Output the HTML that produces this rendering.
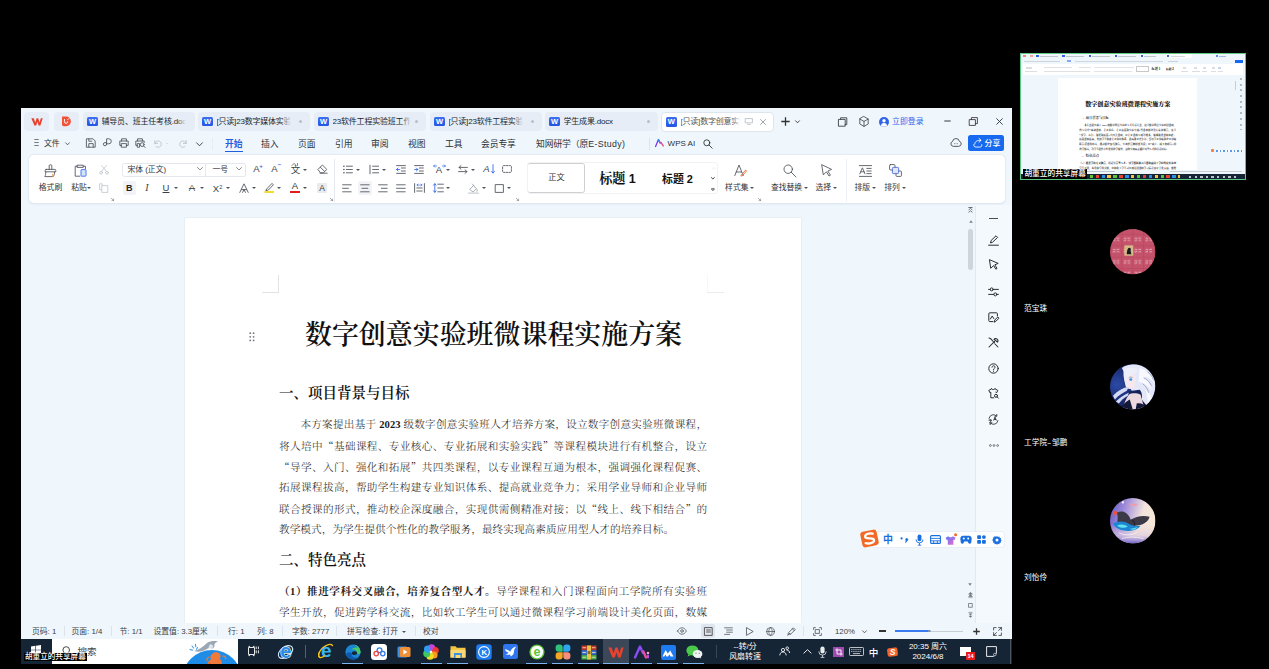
<!DOCTYPE html>
<html lang="zh-CN">
<head>
<meta charset="utf-8">
<title>数字创意实验班微课程实施方案</title>
<style>
*{box-sizing:border-box;margin:0;padding:0}
html,body{width:1269px;height:669px;overflow:hidden;background:#000}
body{position:relative;font-family:"Liberation Sans","Noto Sans CJK SC",sans-serif;color:#222;font-size:9.3px;line-height:1}
.abs{position:absolute}
.t{position:absolute;white-space:nowrap;line-height:1}
svg{position:absolute;overflow:visible}
#win{position:absolute;left:21px;top:108px;width:991px;height:532px;background:#f0f7fc;overflow:hidden}
/* tab strip */
.tab{position:absolute;top:4px;height:19px;border-radius:4px;background:#e6edf6}
.tab.act{background:#fff;border:1px solid #dfe5ee}
.tab .w{position:absolute;left:4.3px;top:4.6px;width:10.6px;height:9.6px;background:linear-gradient(180deg,#3b6ff2,#2455e2);border-radius:1.5px;color:#fff;font-size:7.5px;font-weight:bold;text-align:center;line-height:10px}
.tab .n{position:absolute;left:18.5px;top:4.5px;font-size:8px;color:#22262c;white-space:nowrap;line-height:10px;letter-spacing:-0.2px;max-width:86px;overflow:hidden}
.tab .n::after{content:"";position:absolute;right:0;top:0;width:9px;height:100%;background:linear-gradient(90deg,rgba(230,237,246,0),#e6edf6)}
.tab .n.nf::after{display:none}
.tab.act{top:3.7px;height:20px}
.tab.act .n{max-width:60.5px;top:4.6px}
.tab.act .w{top:4.6px;left:4px}
.tab.act .n::after{background:linear-gradient(90deg,rgba(255,255,255,0),#fff)}
.tab .d{position:absolute;right:8px;top:8px;width:3px;height:3px;border-radius:50%;background:#b9c0cb}
.menu{position:absolute;top:30px;font-size:8.8px;color:#2b3038;line-height:12px;white-space:nowrap;letter-spacing:-0.1px}
#rib{position:absolute;left:8px;top:47px;width:976px;height:48px;background:#fff;border-radius:5px;box-shadow:0 0 0 0.6px #e3e9f1,0 0.5px 2.5px rgba(150,170,200,.3)}
.rl{position:absolute;font-size:7.8px;color:#30353c;white-space:nowrap;line-height:10px;top:183px;transform:translateX(-50%)}
.ic{stroke:#4a4f57;stroke-width:0.85;fill:none;stroke-linecap:round;stroke-linejoin:round}
.gl{position:absolute;white-space:nowrap;line-height:12px;color:#3a3f47;transform:translate(-50%,-50%);font-size:10px}
.car{position:absolute;width:0;height:0;border-left:2px solid transparent;border-right:2px solid transparent;border-top:2.4px solid #50555d;margin-left:-2px;margin-top:-1px}
/* document */
#page{position:absolute;left:164px;top:110px;width:616px;height:420px;background:#fff;box-shadow:0 0 0 0.6px #e2e8f0}
.doc{font-family:"Liberation Serif","Noto Serif CJK SC",serif;color:#111}
.ln{position:absolute;left:279px;width:428px;font-size:10.6px;line-height:14px;height:14px;text-align:justify;text-align-last:justify;white-space:nowrap;font-family:"Liberation Serif","Noto Serif CJK SC",serif;color:#1a1a1a;font-weight:300}
.ln b{font-weight:700}
.sb{position:absolute;top:626.8px;font-size:7.8px;color:#3a3f47;white-space:nowrap;line-height:10px}
.q{font-family:"Noto Serif CJK SC",serif}
#task{position:absolute;left:21px;top:638.8px;width:991px;height:25.2px;background:#152536;overflow:hidden}
</style>
</head>
<body>

<!-- ===================== WPS WINDOW ===================== -->
<div id="win">
  <!-- tab strip -->
  <div class="tab" style="left:3px;width:25px"></div>
  <div class="tab" style="left:33px;width:25px"></div>
  <div class="tab" style="left:62px;width:112px"><span class="w">W</span><span class="n">辅导员、班主任考核.doc</span></div>
  <div class="tab" style="left:177px;width:112px"><span class="w">W</span><span class="n">[只读]23数字媒体实验</span><span class="d"></span></div>
  <div class="tab" style="left:293px;width:112px"><span class="w">W</span><span class="n">23软件工程实验班工作</span><span class="d"></span></div>
  <div class="tab" style="left:409px;width:112px"><span class="w">W</span><span class="n">[只读]23软件工程实验</span><span class="d"></span></div>
  <div class="tab" style="left:524px;width:113px"><span class="w">W</span><span class="n nf">学生成果.docx</span><span class="d"></span></div>
  <div class="tab act" style="left:640px;width:113px"><span class="w">W</span><span class="n" style="color:#555">[只读]数字创意实验</span></div>

  <!-- menu row -->
  <span class="menu" style="left:23px;font-size:7.9px">文件</span>
  <span class="menu" style="left:204px;color:#1f5fe0;font-weight:bold">开始</span>
  <div class="abs" style="left:204px;top:43px;width:18px;height:1.4px;background:#1f5fe0"></div>
  <span class="menu" style="left:240px">插入</span>
  <span class="menu" style="left:277px">页面</span>
  <span class="menu" style="left:314px">引用</span>
  <span class="menu" style="left:350px">审阅</span>
  <span class="menu" style="left:387px">视图</span>
  <span class="menu" style="left:424px">工具</span>
  <span class="menu" style="left:460px">会员专享</span>
  <span class="menu" style="left:515px">知网研学（原<span style="letter-spacing:0.350px">E-Study)</span></span>
  <span class="menu" style="left:646.6px;font-size:8px;letter-spacing:0">WPS AI</span>

  <!-- ribbon -->
  <div id="rib"></div>

  <!-- page -->
  <div id="page"></div>

  <!-- global-coordinate layer (coordinates = screenshot pixels) -->
  <div id="g" class="abs" style="left:-21px;top:-108px;width:1269px;height:669px">


    <!-- ============ TAB STRIP ICONS ============ -->
    <svg style="left:30.5px;top:117.5px" width="12" height="8" viewBox="0 0 12 8"><path d="M0.3 0.3h2.5l1.4 4.2L5.6 0.3h1.6l1.3 4.2 1.3-4.2h1.9L9.4 7.6H7.6L6.4 3.8 5.2 7.6H3.4z" fill="#e8412f"/></svg>
    <svg style="left:60.8px;top:116.2px" width="10.2" height="10.8" viewBox="0 0 10 10" preserveAspectRatio="none"><path d="M1 0.5h4.2a4.5 4.5 0 0 1 0 9H2.6A1.6 1.6 0 0 1 1 7.9z" fill="#f0523a"/><path d="M3.4 3.2v2a1.6 1.6 0 0 0 3.2 0M6.6 3.4l1-1" stroke="#fff" stroke-width="0.9" fill="none" stroke-linecap="round"/></svg>
    <!-- active tab extras -->
    <svg style="left:745px;top:118px" width="8" height="7" viewBox="0 0 8 7"><path class="ic" d="M0.6 0.6h6.8v4.2H0.6zM2.6 6.4h2.8" style="stroke:#aab0b9;stroke-width:0.7"/></svg>
    <svg style="left:760px;top:118.5px" width="6" height="6" viewBox="0 0 6 6"><path class="ic" d="M0.5 0.5l5 5M5.5 0.5l-5 5" style="stroke:#8a9099;stroke-width:0.8"/></svg>
    <svg style="left:780.5px;top:117px" width="9" height="9" viewBox="0 0 9 9"><path d="M4.5 0.3v8.4M0.3 4.5h8.4" stroke="#333" stroke-width="1.3" fill="none"/></svg>
    <svg style="left:795px;top:120px" width="5" height="4" viewBox="0 0 5 4"><path class="ic" d="M0.6 0.8L2.5 2.8 4.4 0.8" style="stroke:#333;stroke-width:0.9"/></svg>
    <svg style="left:838px;top:116.5px" width="10" height="10" viewBox="0 0 10 10"><path class="ic" d="M0.8 2.4h6.4v6.8H0.8zM2.6 2.4V0.8h6.2v6.8H7.2" style="stroke:#3a3f47;stroke-width:0.9"/></svg>
    <svg style="left:858.5px;top:116px" width="10" height="11" viewBox="0 0 10 11"><path class="ic" d="M5 0.6l4.2 2.4v5L5 10.4 0.8 8V3zM0.8 3L5 5.4 9.2 3M5 5.4v5" style="stroke:#3a3f47;stroke-width:0.8"/></svg>
    <svg style="left:878.5px;top:116.5px" width="10" height="10" viewBox="0 0 10 10"><circle cx="5" cy="5" r="5" fill="#2f64e8"/><circle cx="5" cy="3.8" r="1.7" fill="#fff"/><path d="M1.8 8.4a3.3 3.3 0 0 1 6.4 0a4.6 4.6 0 0 1-6.4 0z" fill="#fff"/></svg>
    <span class="t" style="left:892px;top:117px;font-size:7.9px;color:#2f64e8;line-height:10px">立即登录</span>
    <svg style="left:944px;top:119.5px" width="7" height="2" viewBox="0 0 7 2"><path d="M0.3 1h6.4" stroke="#222" stroke-width="0.9"/></svg>
    <svg style="left:969px;top:116.5px" width="9" height="9" viewBox="0 0 9 9"><path class="ic" d="M0.6 2.6h5.8v5.8H0.6zM2.4 2.6V0.6h6v6H6.4" style="stroke:#333;stroke-width:0.850"/></svg>
    <svg style="left:995.5px;top:118px" width="7" height="7" viewBox="0 0 7 7"><path d="M0.4 0.4l6.2 6.2M6.6 0.4L0.4 6.6" stroke="#333" stroke-width="0.9" fill="none"/></svg>

    <!-- ============ MENU ROW ICONS ============ -->
    <svg style="left:33.5px;top:139.4px" width="5" height="7" viewBox="0 0 5 7"><path d="M0.3 0.5h4.4M0.3 3.5h4.4M0.3 6.5h4.4" stroke="#444" stroke-width="0.7"/></svg>
    <svg style="left:64.5px;top:142px" width="5" height="4" viewBox="0 0 5 4"><path class="ic" d="M0.6 0.8L2.5 2.8 4.4 0.8" style="stroke:#444;stroke-width:0.8"/></svg>
    <svg style="left:85.5px;top:138px" width="10" height="10" viewBox="0 0 10 10"><path class="ic" d="M0.8 0.8h6.2l2.2 2.2v6.2H0.8zM2.8 9V5.6h4.4V9M2.8 0.8v2.4h3"/></svg>
    <svg style="left:102.5px;top:138px" width="9" height="10" viewBox="0 0 9 10"><path class="ic" d="M3.6 6.2V0.8h2.2a2.5 2.5 0 0 1 0 5H3.6M3.6 6.2a1.6 1.6 0 1 1-1.6-1.6h1.6"/></svg>
    <svg style="left:118.5px;top:138px" width="10" height="10" viewBox="0 0 10 10"><path class="ic" d="M2.6 3V0.8h4.8V3M2.6 7.4H0.8V3h8.4v4.4H7.4M2.6 5.6h4.8v3.6H2.6z"/></svg>
    <svg style="left:135px;top:138px" width="11" height="10" viewBox="0 0 11 10"><path class="ic" d="M2.6 3V0.8h4.8V3M2.4 7.4H0.8V3h8.4v1.4M2.6 5.6h2v3.6h-2z"/><circle cx="7.2" cy="6.6" r="1.9" class="ic"/><path class="ic" d="M8.6 8l1.6 1.6"/></svg>
    <svg style="left:154px;top:139.5px" width="8" height="8" viewBox="0 0 8 8"><path class="ic" d="M0.8 0.6v2.8h2.8M1 3.2a3.2 3.2 0 1 1 1 3.4" style="stroke:#b9bec6"/></svg><i class="car" style="left:167.6px;top:144px;border-top-color:#c4c8cf;border-left-width:1.5px;border-right-width:1.5px;border-top-width:1.8px;margin-left:-1.5px"></i>
    <svg style="left:178.5px;top:139.5px" width="8" height="8" viewBox="0 0 8 8"><path class="ic" d="M7.2 0.6v2.8H4.4M7 3.2a3.2 3.2 0 1 0-1 3.4" style="stroke:#b9bec6"/></svg>
    <svg style="left:195.5px;top:141.5px" width="7" height="5" viewBox="0 0 7 5"><path class="ic" d="M0.6 0.8L3.5 3.8 6.4 0.8" style="stroke:#333;stroke-width:0.9"/></svg>
    <div class="abs" style="left:212px;top:137.5px;width:0.7px;height:12px;background:#e8edf4"></div>
    <div class="abs" style="left:649px;top:137.5px;width:0.7px;height:12px;background:#dfe4ec"></div>
    <svg style="left:654.6px;top:138.8px" width="9" height="8" viewBox="0 0 10 9"><path d="M0.6 8.4L3.8 0.6l2 4.2" stroke="#7a3df0" stroke-width="1.5" fill="none" stroke-linejoin="round" stroke-linecap="round"/><path d="M6.4 3.6l2.8 4.2" stroke="#f0437a" stroke-width="1.5" fill="none" stroke-linecap="round"/><path d="M3.8 0.8l1.2 2.6" stroke="#2f8cf0" stroke-width="1.5" fill="none" stroke-linecap="round"/></svg>
    <svg style="left:702.5px;top:139px" width="10" height="10" viewBox="0 0 10 10"><circle cx="3.8" cy="3.8" r="3" class="ic" style="stroke:#333;stroke-width:0.9"/><path d="M6 6l3.2 3.2" class="ic" style="stroke:#333;stroke-width:0.9"/></svg>
    <svg style="left:949.6px;top:137.7px" width="12" height="9" viewBox="0 0 12 9"><path class="ic" d="M3 8.3A2.5 2.5 0 0 1 2.5 3.5A3.5 3.5 0 0 1 9.4 3.4A2.5 2.5 0 0 1 9 8.3z" style="stroke:#333;stroke-width:0.8"/><g fill="#333"><circle cx="4.3" cy="5.7" r="0.45"/><circle cx="6" cy="5.7" r="0.45"/><circle cx="7.7" cy="5.7" r="0.45"/></g></svg>
    <div class="abs" style="left:968.2px;top:135.2px;width:36.2px;height:15.4px;background:#176af0;border-radius:2.5px"></div>
    <svg style="left:972.5px;top:138.2px" width="9.5" height="9.5" viewBox="0 0 9 9"><path d="M1.7 5.6C1.7 3.2 4 2.1 7.4 2.2M5.7 0.5L7.6 2.2 5.7 4M0.8 6.2C0.5 8 1.6 8.6 3 8.6H6.2C7.7 8.6 8.6 8 8.3 6.3" stroke="#fff" stroke-width="0.85" fill="none" stroke-linecap="round" stroke-linejoin="round"/></svg>
    <span class="t" style="left:984.6px;top:139.2px;font-size:7.9px;color:#fff;line-height:10px;font-weight:500">分享</span>

    <!-- ============ RIBBON CONTENT ============ -->
    <!-- clipboard group -->
    <svg style="left:43.6px;top:163.8px" width="13" height="13.5" viewBox="0 0 13 13.5"><path class="ic" d="M5.2 5.4V1.7a0.9 0.9 0 0 1 0.9-0.9h0.8a0.9 0.9 0 0 1 0.9 0.9v3.7M2.2 5.4h8.6a1 1 0 0 1 1 1v1.4H1.2V6.4a1 1 0 0 1 1-1zM1.8 7.8c0 2.2-.4 3.6-1 4.8h8.4c1-1.2 1.4-2.8 1.4-4.8"/><path d="M8.6 10.2v2.4" class="ic" style="stroke:#e39a4a"/></svg>
    <span class="rl" style="left:50.5px">格式刷</span>
    <svg style="left:74px;top:164px" width="13" height="13" viewBox="0 0 13 13"><path class="ic" d="M3.2 2.2H1.2v10h4.6M9.4 2.2h2v2.6M3.4 1.2h5.8v2.2H3.4z"/><rect x="7" y="5.6" width="5" height="6.6" rx="0.6" fill="#d6e4ff" stroke="#3a6cf0" stroke-width="0.9"/></svg>
    <span class="rl" style="left:79px">粘贴</span><i class="car" style="left:88.5px;top:188px"></i>
    <svg style="left:99px;top:165px" width="10" height="10" viewBox="0 0 10 10"><g class="ic" style="stroke:#c3c8cf"><path d="M2.6 0.6L7.6 6.6M7.4 0.6L2.4 6.6"/><circle cx="2" cy="7.8" r="1.4"/><circle cx="8" cy="7.8" r="1.4"/></g></svg>
    <svg style="left:99px;top:182.5px" width="10" height="10" viewBox="0 0 10 10"><g class="ic" style="stroke:#c3c8cf"><path d="M3.2 2.6V0.8h-2.6v5.8h2M3.2 2.6h5.6v6.8H3.2z"/></g></svg>
    <svg style="left:111px;top:198px" width="3" height="3" viewBox="0 0 3 3"><path d="M0.3 0.3L2.6 2.6M2.6 1v1.6H1" class="ic" style="stroke-width:0.6;stroke:#777"/></svg>

    <!-- font group row 1 -->
    <div class="abs" style="left:121.5px;top:162.5px;width:84px;height:14px;border:0.7px solid #e4e8ee;border-radius:2.5px 0 0 2.5px;background:#fff"></div>
    <div class="abs" style="left:205.5px;top:162.5px;width:40px;height:14px;border:0.7px solid #e4e8ee;border-left:none;border-radius:0 2.5px 2.5px 0;background:#fff"></div>
    <span class="t" style="left:127.5px;top:164.6px;font-size:7.8px;color:#30353c;line-height:9px">宋体 (正文)</span>
    <svg style="left:197px;top:167.1px" width="6" height="4" viewBox="0 0 6 4"><path class="ic" d="M0.5 0.5L3 3l2.5-2.5" style="stroke:#777"/></svg>
    <span class="t" style="left:212.5px;top:164.6px;font-size:7.8px;color:#30353c;line-height:9px">一号</span>
    <svg style="left:235.5px;top:167.1px" width="6" height="4" viewBox="0 0 6 4"><path class="ic" d="M0.5 0.5L3 3l2.5-2.5" style="stroke:#777"/></svg>
    <span class="gl" style="left:256.5px;top:169.3px;font-size:9.6px;color:#444">A</span><span class="gl" style="left:261px;top:165.6px;font-size:6px;color:#2f64e8;font-weight:bold">+</span>
    <span class="gl" style="left:274.5px;top:169.3px;font-size:9.6px;color:#444">A</span><span class="gl" style="left:279.5px;top:164.6px;font-size:6px;color:#2f64e8;font-weight:bold">−</span>
    <span class="gl" style="left:295.5px;top:169.6px;font-size:9.5px">文</span><svg style="left:291px;top:162.6px" width="10" height="3" viewBox="0 0 10 3"><path class="ic" d="M1 2.5c1.5-2.5 3-2.5 4 0M6.5 0.5v2" style="stroke-width:0.7"/></svg><i class="car" style="left:305.3px;top:169.6px"></i>
    <svg style="left:316.5px;top:164.1px" width="11" height="10" viewBox="0 0 11 10"><path class="ic" d="M1.2 5.2L5.4 1l4.4 4.4-3.4 3.4H3.8zM3 9.2h7.2M3.4 3.2l4.2 4.2"/></svg>

    <!-- font group row 2 -->
    <div class="abs" style="left:122.5px;top:181px;width:13.5px;height:13.5px;background:#f1f3f6;border-radius:2px"></div>
    <span class="gl" style="left:129.2px;top:187.8px;font-weight:bold;font-size:9px;color:#222">B</span>
    <span class="gl" style="left:147px;top:187.8px;font-style:italic;font-size:10px;font-family:'Liberation Serif',serif">I</span>
    <span class="gl" style="left:166px;top:187.5px;font-size:9.5px;text-decoration:underline">U</span><i class="car" style="left:176.2px;top:188px"></i>
    <span class="gl" style="left:192px;top:187.8px;font-size:9.5px;text-decoration:line-through;color:#555">A</span><i class="car" style="left:201.8px;top:188px"></i>
    <span class="gl" style="left:217.5px;top:187.8px;font-size:9.5px">X<span style="font-size:5.5px;vertical-align:3.5px">2</span></span><i class="car" style="left:227.5px;top:188px"></i>
    <svg style="left:239px;top:182.5px" width="10" height="10" viewBox="0 0 10 10"><path class="ic" d="M0.8 9.4L5 0.8l4.2 8.6M2.4 6.6h5.2M3.6 9.4L5 6.4l1.4 3"/></svg><i class="car" style="left:253.7px;top:188px"></i>
    <svg style="left:264px;top:182px" width="11" height="11" viewBox="0 0 11 11"><path class="ic" d="M3 6.6L8 1.4l1.4 1.4-5 5.2-2.200.6z"/><rect x="0.5" y="9" width="9.5" height="2" fill="#f5dc28"/></svg><i class="car" style="left:279.3px;top:188px"></i>
    <span class="gl" style="left:295px;top:186.2px;font-size:9.5px;color:#333">A</span><div class="abs" style="left:290px;top:191px;width:10px;height:2px;background:#e11d1d"></div><i class="car" style="left:305.3px;top:188px"></i>
    <div class="abs" style="left:317px;top:182.5px;width:10px;height:10.5px;background:#e9ebee;border-radius:1px"></div><span class="gl" style="left:322px;top:187.8px;font-size:8.5px;color:#333">A</span>
    <svg style="left:329.5px;top:198px" width="3" height="3" viewBox="0 0 3 3"><path d="M0.3 0.3L2.6 2.6M2.6 1v1.6H1" class="ic" style="stroke-width:0.6;stroke:#777"/></svg>
    <div class="abs" style="left:333.9px;top:158.5px;width:0.7px;height:43px;background:#e6eaf0"></div>

    <!-- paragraph group row 1 -->
    <svg style="left:343px;top:164.6px" width="10" height="9" viewBox="0 0 10 9"><g class="ic"><path d="M3.4 1.2h6M3.4 4.5h6M3.4 7.8h6"/></g><g fill="#4a4f57"><circle cx="0.9" cy="1.2" r="0.8"/><circle cx="0.9" cy="4.5" r="0.8"/><circle cx="0.9" cy="7.8" r="0.8"/></g></svg><i class="car" style="left:357.6px;top:169.6px"></i>
    <svg style="left:369px;top:164.6px" width="10" height="9" viewBox="0 0 10 9"><g class="ic"><path d="M3.6 1.2h6M3.6 4.5h6M3.6 7.8h6M1 0.2v8.6"/></g></svg><i class="car" style="left:383.6px;top:169.6px"></i>
    <svg style="left:396px;top:164.6px" width="10" height="9" viewBox="0 0 10 9"><g class="ic"><path d="M0.6 0.6h8.8M0.6 8.4h8.8M5.4 3h4M5.4 6h4"/><path d="M3.8 4.5H0.6M2 3L0.5 4.5 2 6" style="stroke:#2f64e8"/></g></svg>
    <svg style="left:413.5px;top:164.6px" width="10" height="9" viewBox="0 0 10 9"><g class="ic"><path d="M0.6 0.6h8.8M0.6 8.4h8.8M5.4 3h4M5.4 6h4"/><path d="M0.6 4.5h3.2M2.4 3l1.5 1.5L2.4 6" style="stroke:#2f64e8"/></g></svg>
    <span class="gl" style="left:439px;top:170.1px;font-size:9.5px">A</span><svg style="left:432.5px;top:163.6px" width="13" height="4" viewBox="0 0 13 4"><path class="ic" d="M0.6 2h3M9.4 2h3M1.8 0.8L0.6 2l1.2 1.2M11.2 0.8L12.4 2l-1.2 1.2" style="stroke:#2f64e8;stroke-width:0.7"/></svg><i class="car" style="left:448px;top:169.6px"></i>
    <svg style="left:458px;top:164.6px" width="10" height="9" viewBox="0 0 10 9"><g class="ic"><path d="M9.4 2.4H1M3 0.6L1 2.4l2 1.8M0.6 6.6H9M7 4.8l2 1.8-2 1.8"/></g></svg><i class="car" style="left:473.4px;top:169.6px"></i>
    <span class="gl" style="left:486.5px;top:169.3px;font-size:9.5px;font-style:italic">A</span><svg style="left:490.5px;top:164.1px" width="4" height="10" viewBox="0 0 4 10"><path class="ic" d="M2 0.6v8.4M0.5 7.4L2 9l1.5-1.6" style="stroke:#2f64e8"/></svg>
    <svg style="left:501.5px;top:165.1px" width="10" height="8" viewBox="0 0 10 8"><rect x="0.6" y="0.6" width="8.8" height="6.8" rx="1" class="ic" stroke-dasharray="1.6 1.2"/></svg>

    <!-- paragraph group row 2 -->
    <svg style="left:342px;top:183.5px" width="10" height="9" viewBox="0 0 10 9"><path class="ic" d="M0.6 0.8h8.6M0.6 4.3h5.8M0.6 7.8h8.6"/></svg>
    <div class="abs" style="left:358px;top:181px;width:14px;height:13.5px;background:#f1f3f6;border-radius:2px"></div>
    <svg style="left:360px;top:183.5px" width="10" height="9" viewBox="0 0 10 9"><path class="ic" d="M0.6 0.8h8.6M2 4.3h5.8M0.6 7.8h8.6"/></svg>
    <svg style="left:378px;top:183.5px" width="10" height="9" viewBox="0 0 10 9"><path class="ic" d="M0.6 0.8h8.6M3.4 4.3h5.8M0.6 7.8h8.6"/></svg>
    <svg style="left:396px;top:183.5px" width="10" height="9" viewBox="0 0 10 9"><path class="ic" d="M0.6 0.8h8.6M0.6 4.3h8.6M0.6 7.8h8.6"/></svg>
    <svg style="left:414px;top:183px" width="11" height="10" viewBox="0 0 11 10"><g class="ic"><path d="M0.6 0.6v8.8M10.4 0.6v8.8M2.8 5h5.4M2.8 8h5.4"/><path d="M3 2h5M4 1L3 2l1 1M7 1l1 1-1 1" style="stroke:#2f64e8;stroke-width:0.650"/></g></svg>
    <svg style="left:432.5px;top:183px" width="11" height="10" viewBox="0 0 11 10"><g class="ic"><path d="M4.8 1.2h5.6M4.8 5h5.6M4.8 8.8h5.6"/><path d="M1.8 0.8v8.4M0.5 2.2L1.8 0.7l1.3 1.5M0.5 7.8L1.8 9.3l1.3-1.5" style="stroke:#2f64e8"/></g></svg><i class="car" style="left:448px;top:188px"></i>
    <svg style="left:468px;top:182.5px" width="11" height="11" viewBox="0 0 11 11"><g class="ic" style="stroke:#9aa0a8"><path d="M2 6.2L5.4 2.6l3 3-3 3.2zM4.4 1l1.8 2M8.8 6.4c.8 1 .8 1.6 0 2.2"/><path d="M0.6 10.2h9.8" style="stroke:#c9cdd3;stroke-width:1.2"/></g></svg><i class="car" style="left:483.6px;top:188px"></i>
    <svg style="left:494.5px;top:183.5px" width="9" height="9" viewBox="0 0 9 9"><rect x="0.6" y="0.6" width="7.8" height="7.8" class="ic"/></svg><i class="car" style="left:508.6px;top:188px"></i>
    <svg style="left:515.5px;top:198px" width="3" height="3" viewBox="0 0 3 3"><path d="M0.3 0.3L2.6 2.6M2.6 1v1.6H1" class="ic" style="stroke-width:0.6;stroke:#777"/></svg>

    <!-- styles gallery -->
    <div class="abs" style="left:527.3px;top:163.3px;width:58px;height:29.4px;border:1.2px solid #cfcfcf;border-radius:2.5px;background:#fff"></div>
    <span class="gl" style="left:556.5px;top:178px;font-size:8.2px;color:#333">正文</span>
    <span class="gl doc" style="left:617.5px;top:178.5px;font-size:13.2px;font-weight:bold;color:#111;line-height:16px">标题 <span style="font-family:'Liberation Sans',sans-serif;font-size:12.5px">1</span></span>
    <span class="gl" style="left:677.5px;top:178.5px;font-size:10.9px;font-weight:bold;color:#111;line-height:14px">标题 2</span>
    <svg style="left:711.5px;top:166.5px" width="3.6" height="2.4" viewBox="0 0 5 3"><path class="ic" d="M0.6 2.4L2.5 0.6l1.9 1.8" style="stroke:#dde0e5"/></svg>
    <svg style="left:711.3px;top:177.3px" width="3.8" height="2.6" viewBox="0 0 5 3"><path class="ic" d="M0.6 0.6L2.5 2.4 4.4 0.6" style="stroke:#333;stroke-width:1.2"/></svg>
    <svg style="left:711.3px;top:187.6px" width="3.8" height="3.6" viewBox="0 0 5 5"><path class="ic" d="M0.8 0.6h3.4M0.8 2.2L2.5 4 4.2 2.2z" style="stroke:#444;stroke-width:0.9"/></svg>
    <div class="abs" style="left:526.5px;top:162.3px;width:191px;height:31.5px;border:0.7px solid #f0f2f6;border-radius:3px"></div>

    <!-- style set / find / select / layout / arrange -->
    <svg style="left:733.5px;top:164px" width="13" height="13" viewBox="0 0 13 13"><path class="ic" d="M0.8 11.6L5 1l4.2 10.6M2.2 8h5.2"/><path class="ic" d="M7.6 10.8l4-4.8 1 .8-4 4.8-1.400.4z" style="stroke:#e06a3a"/></svg>
    <span class="rl" style="left:736.8px">样式集</span><i class="car" style="left:751.5px;top:188px"></i>
    <svg style="left:758px;top:198px" width="3" height="3" viewBox="0 0 3 3"><path d="M0.3 0.3L2.6 2.6M2.6 1v1.6H1" class="ic" style="stroke-width:0.6;stroke:#777"/></svg>
    <svg style="left:782.5px;top:164px" width="14" height="14" viewBox="0 0 14 14"><circle cx="5.2" cy="5.2" r="4.2" class="ic"/><path d="M8.2 8.2l4.8 4.8" class="ic"/></svg>
    <span class="rl" style="left:786.5px">查找替换</span><i class="car" style="left:805.5px;top:188px"></i>
    <svg style="left:821px;top:164px" width="12" height="13" viewBox="0 0 12 13"><path class="ic" d="M1 0.8l9.6 4.6-3.8 1.6 2.6 4.2-1.400.8-2.6-4.2-2.8 2.8z"/></svg>
    <span class="rl" style="left:823.3px">选择</span><i class="car" style="left:835.2px;top:188px"></i>
    <div class="abs" style="left:845.7px;top:158.5px;width:0.7px;height:43px;background:#eef1f6"></div>
    <svg style="left:859px;top:164.5px" width="13" height="12" viewBox="0 0 13 12"><path class="ic" d="M0.4 0.6h12.2M0.4 11.4h12.2M7.8 3.4h4.4M7.8 6h4.4M7.8 8.6h4.4M0.8 8.8l2.6-6 2.6 6M1.8 6.8h3.2"/></svg>
    <span class="rl" style="left:862.3px">排版</span><i class="car" style="left:874.2px;top:188px"></i>
    <svg style="left:889px;top:164px" width="13" height="13" viewBox="0 0 13 13"><rect x="0.6" y="0.6" width="5.4" height="5.4" rx="0.8" class="ic"/><rect x="7" y="7" width="5.4" height="5.4" rx="0.8" class="ic"/><rect x="3.4" y="3.4" width="6.2" height="6.2" rx="0.8" fill="#dfe6fb" stroke="#4468d8" stroke-width="0.850"/></svg>
    <span class="rl" style="left:892.1px">排列</span><i class="car" style="left:904px;top:188px"></i>
    <!-- page corner marks -->
    <div class="abs" style="left:262px;top:275px;width:17px;height:17.5px;border-right:1px solid #e3e3e3;border-bottom:1px solid #e3e3e3"></div>
    <div class="abs" style="left:707px;top:275px;width:17px;height:17.5px;border-left:1px solid #f6f6f6;border-bottom:1px solid #ececec"></div>
    <!-- drag handle -->
    <svg style="left:249px;top:332px" width="6" height="10" viewBox="0 0 6 10"><g fill="#70757e"><circle cx="1.2" cy="1.2" r="0.9"/><circle cx="4.6" cy="1.2" r="0.9"/><circle cx="1.2" cy="4.8" r="0.9"/><circle cx="4.6" cy="4.8" r="0.9"/><circle cx="1.2" cy="8.4" r="0.9"/><circle cx="4.6" cy="8.4" r="0.9"/></g></svg>
    <div class="t doc" id="title" style="left:305px;top:319.3px;width:377px;font-size:26.9px;font-weight:600;line-height:32px;text-align:justify;text-align-last:justify;color:#111">数字创意实验班微课程实施方案</div>
    <div class="t doc" id="h1" style="left:279px;top:383.7px;font-size:14.5px;line-height:18px;font-weight:600">一、项目背景与目标</div>
    <div class="ln" style="top:417.8px;padding-left:21.4px">本方案提出基于 <b style="font-weight:700">2023</b> 级数字创意实验班人才培养方案，设立数字创意实验班微课程，</div>
    <div class="ln" style="top:438.8px">将人培中<span class="q">“</span>基础课程、专业核心、专业拓展和实验实践<span class="q">”</span>等课程模块进行有机整合，设立</div>
    <div class="ln" style="top:459.8px"><span class="q">“</span>导学、入门、强化和拓展<span class="q">”</span>共四类课程，以专业课程互通为根本，强调强化课程促赛、</div>
    <div class="ln" style="top:480.8px">拓展课程拔高，帮助学生构建专业知识体系、提高就业竞争力；采用学业导师和企业导师</div>
    <div class="ln" style="top:501.8px">联合授课的形式，推动校企深度融合，实现供需侧精准对接；以<span class="q">“</span>线上、线下相结合<span class="q">”</span>的</div>
    <div class="ln" style="top:522.8px;width:395px">教学模式，为学生提供个性化的教学服务，最终实现高素质应用型人才的培养目标。</div>
    <div class="t doc" id="h2" style="left:279px;top:551px;font-size:14.5px;line-height:18px;font-weight:600">二、特色亮点</div>
    <div class="ln" style="top:584.8px"><b>（1）推进学科交叉融合，培养复合型人才。</b>导学课程和入门课程面向工学院所有实验班</div>
    <div class="ln" style="top:605.8px">学生开放，促进跨学科交流，比如软工学生可以通过微课程学习前端设计美化页面，数媒</div>


    <!-- ============ SCROLLBAR + RIGHT TOOL COLUMN ============ -->
    <div class="abs" style="left:975px;top:205px;width:37px;height:418px;background:#f4f9fd"></div>
    <div class="abs" style="left:974.6px;top:206px;width:0.7px;height:417px;background:#e3e9f1"></div>
    <svg style="left:968px;top:207px" width="5" height="6" viewBox="0 0 5 6"><path d="M0.4 0.5h4.2M0.6 3L2.5 1.4 4.4 3M0.6 5.4L2.5 3.8 4.4 5.4" stroke="#4a4f57" stroke-width="0.8" fill="none"/></svg>
    <svg style="left:968.5px;top:220px" width="4" height="3" viewBox="0 0 4 3"><path d="M2 0.2L3.8 2.8H0.2z" fill="#7a8089"/></svg>
    <div class="abs" style="left:968.2px;top:229px;width:4.6px;height:41px;border-radius:2.3px;background:#d0d5dc"></div>
    <svg style="left:968.2px;top:583px" width="4" height="3" viewBox="0 0 4 3"><path d="M0.2 0.2h3.6L2 2.8z" fill="#7a8089"/></svg>
    <svg style="left:967.7px;top:592px" width="5" height="6" viewBox="0 0 5 6"><path d="M2.5 0.3L4.4 2.2H0.6zM2.5 2.6L4.4 4.5H0.6zM0.4 5.6h4.2" stroke="#6a7079" stroke-width="0.5" fill="#6a7079"/></svg>
    <svg style="left:968px;top:602.5px" width="5" height="5" viewBox="0 0 5 5"><rect x="0.6" y="0.6" width="3.6" height="3.6" fill="none" stroke="#6a7079" stroke-width="0.8"/></svg>
    <svg style="left:967.7px;top:612px" width="5" height="6" viewBox="0 0 5 6"><path d="M0.4 0.4h4.2" stroke="#6a7079" stroke-width="0.6"/><path d="M2.5 3.4L4.4 1.5H0.6zM2.5 5.7L4.4 3.8H0.6z" fill="#6a7079"/></svg>

    <div class="abs" style="left:989.4px;top:217.8px;width:8.5px;height:1px;background:#4a4f57"></div>
    <svg style="left:988.4px;top:234.5px" width="11" height="11" viewBox="0 0 11 11"><path class="ic" d="M2.6 7.6l.6-2.2L8 0.8l1.6 1.6-4.8 4.6zM0.6 10.2h9.8" style="stroke:#2a2e35;stroke-width:1"/></svg>
    <svg style="left:988.9px;top:258.5px" width="10" height="11" viewBox="0 0 10 11"><path class="ic" d="M0.8 0.8l8.4 3.6-3.4 1.4 2.2 3.6-1.200.8-2.2-3.6L2 9z" style="stroke:#2a2e35;stroke-width:1"/></svg>
    <svg style="left:988.4px;top:286.5px" width="11" height="10" viewBox="0 0 11 10"><path class="ic" d="M0.6 2.4h1.6M5.2 2.4h5.2M0.6 7.4h5.2M8.8 7.4h1.6" style="stroke:#2a2e35;stroke-width:1"/><circle cx="3.7" cy="2.4" r="1.5" class="ic" style="stroke:#2a2e35;stroke-width:1"/><circle cx="7.3" cy="7.4" r="1.5" class="ic" style="stroke:#2a2e35;stroke-width:1"/></svg>
    <svg style="left:988.4px;top:311.5px" width="11" height="11" viewBox="0 0 11 11"><path class="ic" d="M9.4 4V1.8a1 1 0 0 0-1-1H1.8a1 1 0 0 0-1 1v6.8a1 1 0 0 0 1 1H5M2.4 7l1.8-3 1.6 2.6M6.4 9.8l.4-1.8 3-3 1.2 1.2-3 3z" style="stroke:#2a2e35;stroke-width:1"/></svg>
    <svg style="left:988.4px;top:337px" width="11" height="11" viewBox="0 0 11 11"><path class="ic" d="M1 10l5.6-5.6M6 2.4a2.2 2.2 0 0 1 3.4 2.8L8 3.8zM1 1l1.400.4L6.6 6M7 7l3 3" style="stroke:#2a2e35;stroke-width:1.05"/></svg>
    <svg style="left:988.4px;top:363px" width="11" height="11" viewBox="0 0 11 11"><circle cx="5.5" cy="5.5" r="4.7" class="ic" style="stroke:#2a2e35;stroke-width:1"/><path class="ic" d="M4 4.2a1.5 1.5 0 1 1 2.4 1.2c-.6.4-.9.7-.9 1.4M5.5 8.2v.2" style="stroke:#2a2e35;stroke-width:1"/></svg>
    <svg style="left:988.4px;top:388px" width="11" height="11" viewBox="0 0 11 11"><path class="ic" d="M3.6 0.8L0.8 2.4l1 2.2 1-.4v5.6h3M7 0.8l2.8 1.6-1 2.2-1-.4M3.6 0.8c.4 1.2 3 1.2 3.4 0" style="stroke:#2a2e35;stroke-width:1"/><circle cx="8" cy="7.8" r="1.5" class="ic" style="stroke:#2a2e35;stroke-width:1"/><path class="ic" d="M9.2 9l1.2 1.2" style="stroke:#2a2e35;stroke-width:1"/></svg>
    <svg style="left:988.4px;top:413.5px" width="11" height="11" viewBox="0 0 11 11"><path class="ic" d="M1 4.4A4.5 4.5 0 0 1 8.6 2M8.8 0.4V2.2H7M10 6.6A4.5 4.5 0 0 1 2.4 9M2.2 10.6V8.8H4M1 6.2h2.4M2.2 5.4v.8M1.4 8.8c1-.4 1.6-1.2 1.8-2.4M7 3.2l-1.2 3M7 3.2l1.2 3M6.2 5.4h1.6" style="stroke:#2a2e35;stroke-width:0.85"/></svg>
    <svg style="left:988.9px;top:443.5px" width="10" height="3" viewBox="0 0 10 3"><g fill="none" stroke="#333" stroke-width="0.6"><circle cx="1.4" cy="1.5" r="0.9"/><circle cx="5" cy="1.5" r="0.9"/><circle cx="8.6" cy="1.5" r="0.9"/></g></svg>

    <!-- ============ SOGOU IME BAR ============ -->
    <div class="abs" style="left:872px;top:531.8px;width:132px;height:15.3px;background:#fff;border-radius:2px;box-shadow:0 0 0 0.5px #e1e7ef"></div>
    <svg style="left:859px;top:527.5px" width="21" height="21" viewBox="0 0 21 21"><rect x="2.2" y="2.6" width="16.6" height="15.8" rx="3" fill="#f26a25" transform="rotate(-12 10.5 10.5)"/><path d="M14.6 6.4C11 4.6 6.6 5.6 6.6 8.2c0 2.8 8 1.6 8 4.6 0 2.6-5 3.4-8.8 1.4" stroke="#fff" stroke-width="2.3" fill="none" stroke-linecap="round" transform="rotate(-12 10.5 10.5)"/></svg>
    <span class="t" style="left:888.1px;top:534px;font-size:10px;color:#1a6fe0;line-height:11px;transform:translateX(-50%);font-weight:bold">中</span>
    <svg style="left:900px;top:535.5px" width="8" height="8" viewBox="0 0 8 8"><circle cx="1.6" cy="2.4" r="1.1" fill="#1a6fe0"/><path d="M5.6 3.6a1.1 1.1 0 1 1 1.1 1.1c0 1-.4 1.6-1.2 2" stroke="#1a6fe0" stroke-width="0.9" fill="#1a6fe0"/></svg>
    <svg style="left:914.5px;top:533.5px" width="9" height="12" viewBox="0 0 9 12"><rect x="2.6" y="0.4" width="3.8" height="6.8" rx="1.9" fill="#1a6fe0"/><path d="M1 5.4a3.5 3.5 0 0 0 7 0M4.5 9v2M2.8 11.2h3.4" stroke="#1a6fe0" stroke-width="0.9" fill="none"/></svg>
    <svg style="left:929.5px;top:535px" width="11" height="9" viewBox="0 0 11 9"><rect x="0.6" y="0.6" width="9.8" height="7.8" rx="1" fill="none" stroke="#1a6fe0" stroke-width="1.1"/><path d="M0.6 3.4h9.8M0.6 5.8h9.8M3.6 5.8v2.6M7.4 5.8v2.6" stroke="#1a6fe0" stroke-width="0.9"/></svg>
    <svg style="left:944.5px;top:532.5px" width="13" height="13" viewBox="0 0 13 13"><defs><linearGradient id="sg" x1="0" y1="0" x2="1" y2="1"><stop offset="0" stop-color="#5a7af5"/><stop offset="1" stop-color="#f06ad0"/></linearGradient></defs><path d="M3.4 3.2L0.6 4.8l1.2 2.4 1-.4v5h5.6v-5l1 .4 1.2-2.4-2.8-1.6c-.6 1.4-3.8 1.4-4.4 0z" fill="url(#sg)"/><circle cx="10.6" cy="1.8" r="1.5" fill="#f26a25"/></svg>
    <svg style="left:960px;top:534.5px" width="12" height="10" viewBox="0 0 12 10"><path d="M3 0.8h6a2.8 2.8 0 0 1 2.6 3.6l-.4 3.2a1.5 1.5 0 0 1-2.800.4L7.8 6.4H4.2L3.6 8a1.5 1.5 0 0 1-2.8-.4L0.4 4.4A2.8 2.8 0 0 1 3 0.8z" fill="#1a6fe0"/><circle cx="3.8" cy="3.6" r="1" fill="#fff"/><circle cx="8.2" cy="3.6" r="1" fill="#fff"/></svg>
    <svg style="left:976.5px;top:535px" width="9" height="9" viewBox="0 0 9 9"><g fill="#1a6fe0"><rect x="0.2" y="0.2" width="3.8" height="3.8" rx="0.8"/><rect x="5" y="0.2" width="3.8" height="3.8" rx="1.9"/><rect x="0.2" y="5" width="3.8" height="3.8" rx="0.8"/><rect x="5" y="5" width="3.8" height="3.8" rx="0.8"/></g></svg>
    <svg style="left:992px;top:534.5px" width="10" height="10" viewBox="0 0 10 10"><path d="M5 0.2l1 1.4 1.7-.5.3 1.7 1.700.3-.5 1.7L10.6 5 9.2 6l.5 1.7-1.700.3-.3 1.7L6 9.2 5 10.6 4 9.2l-1.700.5L2 8 .3 7.700.8 6-.6 5 .8 4 .3 2.3 2 2l.3-1.7L4 1.6z" fill="#1a6fe0" transform="translate(0.5 0.5) scale(0.9)"/><circle cx="5" cy="5" r="1.5" fill="#fff"/></svg>

    <!-- ============ STATUS BAR ============ -->
    <div class="abs" style="left:21px;top:623px;width:991px;height:17px;background:#f0f7fc"></div>
    <span class="sb" style="left:32px">页码: 1</span>
    <span class="sb" style="left:71.5px">页面: 1/4</span>
    <span class="sb" style="left:119.5px">节: 1/1</span>
    <span class="sb" style="left:153.5px">设置值: 3.3厘米</span>
    <span class="sb" style="left:228px">行: 1</span>
    <span class="sb" style="left:257px">列: 8</span>
    <span class="sb" style="left:292px">字数: 2777</span>
    <span class="sb" style="left:347px">拼写检查: 打开</span><i class="car" style="left:404.3px;top:631.8px"></i>
    <span class="sb" style="left:423px">校对</span>
    <div class="abs" style="left:64px;top:626px;width:0.7px;height:10px;background:#dde3eb"></div>
    <div class="abs" style="left:111px;top:626px;width:0.7px;height:10px;background:#dde3eb"></div>
    <div class="abs" style="left:217px;top:626px;width:0.7px;height:10px;background:#dde3eb"></div>
    <div class="abs" style="left:282px;top:626px;width:0.7px;height:10px;background:#dde3eb"></div>
    <div class="abs" style="left:336px;top:626px;width:0.7px;height:10px;background:#dde3eb"></div>
    <div class="abs" style="left:414.5px;top:626px;width:0.7px;height:10px;background:#dde3eb"></div>
    <svg style="left:676.5px;top:627px" width="10" height="8" viewBox="0 0 10 8"><path class="ic" d="M0.6 4C2 1.6 3.4 0.8 5 0.8S8 1.6 9.4 4C8 6.4 6.6 7.2 5 7.2S2 6.4 0.6 4z" style="stroke-width:0.750"/><circle cx="5" cy="4" r="1.3" class="ic" style="stroke-width:0.750"/></svg>
    <div class="abs" style="left:701px;top:624px;width:14px;height:14px;background:#dfe5ee;border-radius:2px"></div>
    <svg style="left:703.5px;top:626.5px" width="9" height="9" viewBox="0 0 9 9"><path class="ic" d="M0.8 0.6h7.4v7.8H0.8zM2.6 3h3.8M2.6 5h3.8" style="stroke:#333;stroke-width:0.8"/></svg>
    <svg style="left:723.5px;top:627px" width="9" height="8" viewBox="0 0 9 8"><path class="ic" d="M0.6 0.8h7.8M2.6 3h5.8M2.6 5.2h5.8M0.6 7.4h5" style="stroke-width:0.750"/></svg>
    <svg style="left:746px;top:626.5px" width="8" height="9" viewBox="0 0 8 9"><path class="ic" d="M0.8 0.8L7.2 4.5 0.8 8.2z" style="stroke-width:0.8"/></svg>
    <svg style="left:766px;top:626.5px" width="9" height="9" viewBox="0 0 9 9"><circle cx="4.5" cy="4.5" r="3.9" class="ic" style="stroke-width:0.750"/><path class="ic" d="M0.6 4.5h7.8M4.5 0.6c-2.4 2.4-2.4 5.4 0 7.8M4.5 0.6c2.4 2.4 2.4 5.4 0 7.8" style="stroke-width:0.7"/></svg>
    <svg style="left:786.5px;top:626.5px" width="9" height="9" viewBox="0 0 9 9"><path class="ic" d="M2.6 6.4l-1.8 2 .6-2.6L6.4 0.8l1.8 1.8-5 5zM5.4 1.8l1.8 1.8" style="stroke-width:0.8"/></svg>
    <div class="abs" style="left:803px;top:626px;width:0.7px;height:10px;background:#dde3eb"></div>
    <svg style="left:813px;top:626.5px" width="9" height="9" viewBox="0 0 9 9"><path class="ic" d="M0.6 2.4V0.6h1.8M6.6 0.6h1.8v1.8M8.4 6.6v1.8H6.6M2.4 8.4H0.6V6.6M2.6 2.6h3.8v3.8H2.6z" style="stroke-width:0.8"/></svg>
    <span class="sb" style="left:835px">120%</span>
    <svg style="left:862px;top:629.5px" width="5" height="4" viewBox="0 0 5 4"><path class="ic" d="M0.6 0.8L2.5 2.8 4.4 0.8" style="stroke:#444;stroke-width:0.8"/></svg>
    <div class="abs" style="left:878.5px;top:630.4px;width:7px;height:1.4px;background:#333"></div>
    <div class="abs" style="left:894.5px;top:630.5px;width:68.5px;height:1.2px;background:#c9ced6"></div>
    <div class="abs" style="left:894.5px;top:630.4px;width:35px;height:1.4px;background:#3b7af0"></div>
    <div class="abs" style="left:928.3px;top:629.7px;width:2.6px;height:2.6px;border-radius:50%;background:#fff;border:0.6px solid #8a9099"></div>
    <svg style="left:972.5px;top:627.5px" width="7" height="7" viewBox="0 0 7 7"><path d="M3.5 0.2v6.6M0.2 3.5h6.6" stroke="#333" stroke-width="1.3"/></svg>
    <svg style="left:992.5px;top:626.5px" width="9" height="9" viewBox="0 0 9 9"><path class="ic" d="M5.6 0.6h2.8v2.8M8.4 0.6L5.6 3.4M3.4 8.4H0.6V5.6M0.6 8.4l2.8-2.8M0.6 3V0.6H3M8.4 6v2.4H6" style="stroke:#333;stroke-width:0.8"/></svg>
  </div>
  <!-- status bar lives in #g -->
</div>

<!-- ===================== TASKBAR ===================== -->
<div id="task">
  <div class="abs" style="left:-21px;top:-638.8px;width:1269px;height:669px">
    <!-- start -->
    <svg style="left:31px;top:644.5px" width="10" height="10" viewBox="0 0 10 10"><path d="M0 1.4L4.4 0.8v3.9H0zM5 0.7L10 0v4.7H5zM0 5.3h4.4v3.9L0 8.6zM5 5.3h5V10L5 9.3z" fill="#fff"/></svg>
    <!-- search box -->
    <div class="abs" style="left:51.5px;top:638.8px;width:186.5px;height:25.2px;background:#fff;overflow:hidden">
      <div class="abs" style="left:130.5px;top:11.4px;width:60px;height:60px;border-radius:50%;background:#1f8de8"></div>
      <svg style="left:136px;top:1.2px" width="48" height="24" viewBox="0 0 48 24"><path d="M6 11c4-1 9-4 13-8 3-2 8-2.5 11-1.5-2 .8-3 1.6-3.6 3 .6 2-.6 3.6-2 4-2-1-4-.6-6 .8-3 2-8 3.2-12.4 1.7z" fill="#9aa7b4"/><path d="M22 4c2 .4 3 1.4 3.4 3-1.4 1.4-3 1.6-5 .8z" fill="#dfe6ec"/><path d="M4 6l1.6 2M2 9.5l2.400.6M7.4 4.4l.4 2.4M9.5 7.5l-1 1.8" stroke="#3aa0f0" stroke-width="1.1" stroke-linecap="round"/><path d="M24 14c2-2.5 6-2.5 8 0 1.2 2 .6 4-.6 5 1.600.6 2.6 2 2.6 5h-12c-1-2-.6-4 1-5-1-1.4-.8-3.6 1-5z" fill="#f07a3a"/><path d="M21 17c-1.600.6-2.4 2-2 3.6M35 16c1.6 0 2.6 1 2.6 2.6M22 21c-1.6 1-2 2-1.6 3" stroke="#f07a3a" stroke-width="1.2" fill="none" stroke-linecap="round"/></svg>
    </div>
    <svg style="left:62px;top:645.5px" width="9" height="10" viewBox="0 0 9 10"><circle cx="4.2" cy="4" r="3.3" fill="none" stroke="#333" stroke-width="0.9"/><path d="M2 6.8L0.6 9" stroke="#333" stroke-width="0.9"/></svg>
    <span class="t" style="left:77.5px;top:646px;font-size:9.6px;color:#444;line-height:11px">搜索</span>
    <!-- task view -->
    <svg style="left:247.6px;top:646px" width="11" height="10" viewBox="0 0 11 10"><path d="M0.5 1.5h6v7h-6zM8.2 0.5v2.6M8.2 4.3v3M10.4 0.5v2.6M10.4 4.3v3M0.5 0.4h1.6M4.9 0.4h1.6M0.5 9.6h1.6M4.9 9.6h1.6" stroke="#fff" stroke-width="0.9" fill="none"/></svg>
    <!-- IE classic -->
    <svg style="left:276.5px;top:641.5px" width="17" height="19" viewBox="0 0 17 19"><ellipse cx="8.5" cy="10" rx="8.2" ry="5" transform="rotate(-38 8.5 10)" fill="none" stroke="#cfe6fa" stroke-width="1.1"/><text x="8.7" y="16.2" font-family="Liberation Sans,sans-serif" font-size="20" font-weight="bold" fill="#2b8be8" stroke="#e6f2fc" stroke-width="1.3" paint-order="stroke" text-anchor="middle">e</text></svg>
    <div class="abs" style="left:305px;top:645px;width:0.8px;height:13px;background:#55606e"></div>
    <!-- IE11 -->
    <svg style="left:317px;top:642px" width="18" height="18" viewBox="0 0 18 18"><path d="M15.5 3.5C13.5 1 6 3.5 2.5 10c-1.5 3-1 5 .5 5.5" fill="none" stroke="#f2c21a" stroke-width="1.3" stroke-linecap="round"/><text x="9.3" y="15" font-family="Liberation Sans,sans-serif" font-size="19" font-weight="bold" fill="#3ab4f2" text-anchor="middle">e</text><path d="M2.5 10c-1.5 3-1 5 .5 5.5 1.200.3 3-.400 4.5-1.5" fill="none" stroke="#f2c21a" stroke-width="1.3" stroke-linecap="round"/></svg>
    <!-- Edge -->
    <svg style="left:344.5px;top:643.6px" width="16" height="16" viewBox="0 0 16 16"><circle cx="8" cy="8" r="7.6" fill="#1b86d6"/><path d="M8 0.4A7.6 7.6 0 0 1 15.6 8c0 1.5-1 2.3-2.2 2.1-1.4-.4-1.5-2-2.1-2.9C10.4 5.7 8.4 5 6.4 5.8 7.8 3.6 10.5 3 12.6 3.7 11.5 1.8 9.8 0.6 8 0.4z" fill="#48c86c"/><path d="M1 10.8A7.6 7.6 0 0 0 13.4 13.4C9.4 14.8 6.2 12.4 6.6 9.4 4 7.4 1.6 8.4 1 10.8z" fill="#0c5ab0"/><path d="M6.6 9.6c.2-1.8 2.4-2.8 4.4-2 .8.4 1.2 1.2 1 2-.3 1.2-1.8 1.6-3 1.4-1.2-.2-2.2-.6-2.4-1.4z" fill="#152536"/></svg>
    <div class="abs" style="left:342px;top:662.6px;width:21px;height:1.4px;background:#7db4f0"></div>
    <!-- baidu netdisk -->
    <div class="abs" style="left:371px;top:644px;width:15.5px;height:15.5px;border-radius:3.5px;background:#fff"></div>
    <svg style="left:372.5px;top:647px" width="13" height="10" viewBox="0 0 13 10"><circle cx="6.5" cy="3.2" r="2.4" fill="none" stroke="#2f7cf0" stroke-width="1.3"/><circle cx="3.2" cy="6.6" r="2.2" fill="none" stroke="#f0433a" stroke-width="1.3"/><circle cx="9.8" cy="6.6" r="2.2" fill="none" stroke="#2f7cf0" stroke-width="1.3"/></svg>
    <!-- video -->
    <svg style="left:397px;top:645px" width="14" height="14" viewBox="0 0 14 14"><rect x="0.5" y="1.5" width="10" height="11" rx="1.5" fill="#3f8fdf"/><rect x="3" y="2" width="10.5" height="10" rx="1.5" fill="#f0913a"/><path d="M6.4 4.4l4 2.6-4 2.6z" fill="#fff"/></svg>
    <!-- pinwheel -->
    <svg style="left:423px;top:643.6px" width="16" height="16" viewBox="0 0 16 16"><circle cx="8" cy="8" r="6" fill="#fff"/><circle cx="8.6" cy="3.8" r="3.6" fill="#c445e0"/><circle cx="12.2" cy="6.6" r="3.6" fill="#f0382e"/><circle cx="11" cy="11" r="3.6" fill="#f59a23"/><circle cx="7" cy="12.2" r="3.6" fill="#f5dc23"/><circle cx="3.8" cy="9.6" r="3.6" fill="#3cc85a"/><circle cx="4.6" cy="5.2" r="3.6" fill="#2f9cf0"/><path d="M8 8L6.5 1.5A3.6 3.6 0 0 1 11.5 2.5z" fill="#c445e0"/><circle cx="8" cy="8" r="1.3" fill="#fff"/></svg>
    <div class="abs" style="left:421px;top:662.6px;width:21px;height:1.4px;background:#7db4f0"></div>
    <!-- explorer -->
    <svg style="left:449.5px;top:645px" width="16" height="14" viewBox="0 0 16 14"><path d="M0.5 1.2h5l1.4 1.6h8.6v9.8H0.5z" fill="#f5c542"/><path d="M0.5 4.8h15v7.8H0.5z" fill="#f9d976"/><rect x="4" y="8" width="8" height="5" fill="#3f8fdf"/><rect x="5.6" y="10" width="4.8" height="3" fill="#f9d976"/></svg>
    <div class="abs" style="left:447px;top:662.6px;width:21px;height:1.4px;background:#7db4f0"></div>
    <!-- K -->
    <svg style="left:476px;top:643.6px" width="16" height="16" viewBox="0 0 16 16"><rect x="0.3" y="0.3" width="15.4" height="15.4" rx="3" fill="#1f7cf0"/><circle cx="8" cy="8" r="5.4" fill="none" stroke="#fff" stroke-width="1.1"/><text x="8.2" y="10.9" font-family="Liberation Sans,sans-serif" font-size="7.8" font-weight="bold" fill="#fff" text-anchor="middle">K</text></svg>
    <!-- bird -->
    <div class="abs" style="left:502.5px;top:643.6px;width:15.5px;height:15.5px;border-radius:2.5px;background:#2f76ee"></div>
    <svg style="left:504px;top:645.6px" width="13" height="12" viewBox="0 0 13 12"><path d="M0.8 3.2c2.400.2 4.2 1 5.4 2.6C7 3 9 1 12.4 0.4 10.8 2 10 3.6 10 5.6c0 2.6-1.4 4.4-3.8 5 .4-.8.4-1.6 0-2.2C4.6 9 3 9 1.4 8.4c1.6-.4 2.6-1 3-2C2.8 6 1.6 5 0.8 3.2z" fill="#fff"/></svg>
    <!-- 360 -->
    <svg style="left:528.5px;top:644px" width="16" height="16" viewBox="0 0 16 16"><circle cx="8" cy="8" r="7.6" fill="#5fc43a"/><circle cx="8" cy="8" r="6.2" fill="#fff"/><text x="8" y="12.2" font-family="Liberation Sans,sans-serif" font-size="12.5" font-weight="bold" fill="#5fc43a" text-anchor="middle">e</text></svg>
    <div class="abs" style="left:526px;top:662.6px;width:21px;height:1.4px;background:#7db4f0"></div>
    <!-- clover -->
    <svg style="left:554.5px;top:643.6px" width="16" height="16" viewBox="0 0 16 16"><path d="M7.7 7.7H3.6A3 3 0 0 1 0.6 4.7V3.6A3 3 0 0 1 3.6 0.6H4.7A3 3 0 0 1 7.7 3.6z" fill="#2fbf7a"/><path d="M8.3 7.7h4.1a3 3 0 0 0 3-3V3.6a3 3 0 0 0-3-3H11.3a3 3 0 0 0-3 3z" fill="#2fa4f0"/><path d="M7.7 8.3H3.6a3 3 0 0 0-3 3v1.1a3 3 0 0 0 3 3h1.1a3 3 0 0 0 3-3z" fill="#f5a623"/><path d="M8.3 8.3h4.1a3 3 0 0 1 3 3v1.1a3 3 0 0 1-3 3H11.3a3 3 0 0 1-3-3z" fill="#f58f7c"/></svg>
    <div class="abs" style="left:552px;top:662.6px;width:21px;height:1.4px;background:#7db4f0"></div>
    <!-- winrar -->
    <svg style="left:580.5px;top:644.5px" width="16" height="15" viewBox="0 0 16 15"><rect x="0.5" y="0.5" width="15" height="4.4" fill="#c0392b"/><rect x="0.5" y="5.3" width="15" height="4.4" fill="#3f6fd0"/><rect x="0.5" y="10.1" width="15" height="4.4" fill="#4caf50"/><rect x="6" y="0.5" width="4" height="14" fill="#e8c24a"/><path d="M1.5 2.7h3.5M11 2.7h3.5M1.5 7.5h3.5M11 7.5h3.5M1.5 12.3h3.5M11 12.3h3.5" stroke="#f5e6a8" stroke-width="0.8"/><rect x="6.6" y="6" width="2.8" height="3" fill="#8a6d1a"/></svg>
    <div class="abs" style="left:578px;top:662.6px;width:21px;height:1.4px;background:#7db4f0"></div>
    <!-- WPS active -->
    <div class="abs" style="left:603px;top:638.8px;width:26px;height:25.2px;background:#3c4858"></div>
    <svg style="left:608px;top:646.5px" width="16" height="11" viewBox="0 0 16 11"><path d="M0.3 0.4h3.3l1.9 5.8L7.4 0.4h2.2l1.8 5.8 1.8-5.8h2.5L12.6 10.6h-2.4L8.5 5.4l-1.7 5.2H4.4z" fill="#e8412f"/></svg>
    <div class="abs" style="left:603px;top:662.6px;width:26px;height:1.4px;background:#7db4f0"></div>
    <!-- purple Ai -->
    <svg style="left:634px;top:645px" width="16" height="14" viewBox="0 0 16 14"><path d="M1 12.5L6 1.5l3 6.5" stroke="#8a4df5" stroke-width="2.4" fill="none" stroke-linecap="round" stroke-linejoin="round"/><path d="M9.4 6.4l2.6 6" stroke="#f04da0" stroke-width="2.4" fill="none" stroke-linecap="round"/><circle cx="14" cy="8" r="1.3" fill="#f5a0d0"/><path d="M14 10.5v2" stroke="#c04df0" stroke-width="2" stroke-linecap="round"/></svg>
    <div class="abs" style="left:631px;top:662.6px;width:21px;height:1.4px;background:#7db4f0"></div>
    <!-- blue mountain -->
    <div class="abs" style="left:660.5px;top:644.5px;width:15px;height:15px;border-radius:2px;background:#1f7cf0"></div>
    <svg style="left:662px;top:648.5px" width="12" height="8" viewBox="0 0 12 8"><path d="M0.5 7.5L3.6 1l2.2 3.6L8.2 1.6l3.3 5.9H8.6L7.4 5.4 6 7.5H4.4L3.4 5.4 2.4 7.5z" fill="#fff"/></svg>
    <div class="abs" style="left:657px;top:662.6px;width:21px;height:1.4px;background:#7db4f0"></div>
    <!-- wechat -->
    <svg style="left:685.5px;top:645px" width="17" height="14" viewBox="0 0 17 14"><ellipse cx="6.4" cy="5.4" rx="6" ry="5" fill="#4cc94a"/><path d="M2.4 9l-.8 2.6 3-1.4z" fill="#4cc94a"/><ellipse cx="11.6" cy="9" rx="4.8" ry="4" fill="#eef2f0"/><path d="M14.6 11.8l.6 1.8-2.2-1z" fill="#eef2f0"/><circle cx="10" cy="8.2" r="0.6" fill="#777"/><circle cx="13.2" cy="8.2" r="0.6" fill="#777"/></svg>
    <div class="abs" style="left:683px;top:662.6px;width:21px;height:1.4px;background:#7db4f0"></div>
    <div class="abs" style="left:715.5px;top:645px;width:0.8px;height:13px;background:#3a4656"></div>
    <!-- fan speed -->
    <span class="t" style="left:745px;top:642px;font-size:7.9px;color:#fff;line-height:10px;text-align:center;transform:translateX(-50%)">--转/分<br>风扇转速</span>
    <svg style="left:778.5px;top:646px" width="11" height="10" viewBox="0 0 11 10"><g fill="none" stroke="#fff" stroke-width="0.850"><circle cx="4" cy="4" r="1.6"/><path d="M0.8 9.4c.2-2.4 1.4-3.4 3.2-3.4s3 1 3.2 3.4"/><circle cx="8.2" cy="2.2" r="1.3"/><path d="M7.6 4.2c1.8-.2 2.800.8 3 2.8"/></g></svg>
    <svg style="left:802.5px;top:648.5px" width="9" height="5" viewBox="0 0 9 5"><path d="M0.6 4.4L4.5 0.7l3.9 3.7" stroke="#fff" stroke-width="0.9" fill="none"/></svg>
    <svg style="left:818px;top:645.5px" width="9" height="12" viewBox="0 0 9 12"><rect x="2.4" y="0.4" width="4.2" height="7.2" rx="2.1" fill="#e8eaee"/><path d="M0.8 5.4a3.7 3.7 0 0 0 7.4 0M4.5 9.2v2M2.6 11.4h3.8" stroke="#e8eaee" stroke-width="0.8" fill="none"/></svg>
    <div class="abs" style="left:833px;top:646.5px;width:10.5px;height:10.5px;background:#a04ab0"></div>
    <svg style="left:834.5px;top:648px" width="8" height="8" viewBox="0 0 8 8"><path d="M2 0.4v5.6h5.6M0.4 2h5.6v5.6" stroke="#fff" stroke-width="0.9" fill="none"/></svg>
    <svg style="left:848.5px;top:647px" width="15" height="9" viewBox="0 0 15 9"><rect x="0.5" y="0.5" width="14" height="8" rx="0.8" fill="none" stroke="#e8eaee" stroke-width="0.8"/><path d="M2.2 2.6h10.6M2.2 4.5h10.6" stroke="#e8eaee" stroke-width="0.8" stroke-dasharray="1.2 0.9"/><path d="M4 6.6h7" stroke="#e8eaee" stroke-width="0.8"/></svg>
    <span class="t" style="left:873.5px;top:646.5px;font-size:9.6px;color:#fff;line-height:11px;transform:translateX(-50%);font-weight:500">中</span>
    <svg style="left:886.5px;top:646.5px" width="11" height="10" viewBox="0 0 11 10"><rect x="0.3" y="0.8" width="10.4" height="8.6" rx="2" fill="#f0642a" transform="rotate(-8 5.5 5)"/><text x="5.5" y="8.2" font-family="Liberation Sans,sans-serif" font-size="8.5" font-weight="bold" font-style="italic" fill="#fff" text-anchor="middle">S</text></svg>
    <span class="t" style="left:928px;top:641.6px;font-size:8px;color:#fff;line-height:9.9px;text-align:center;transform:translateX(-50%)">20:35 周六<br>2024/6/8</span>
    <div class="abs" style="left:960px;top:647px;width:10.5px;height:8.5px;background:#fff"></div>
    <div class="abs" style="left:966px;top:651.7px;width:9px;height:8px;background:#e81c1c;color:#fff;font-size:5.5px;line-height:8px;text-align:center;font-weight:bold">14</div>
    <svg style="left:985.5px;top:646px" width="11" height="11" viewBox="0 0 11 11"><path d="M0.6 0.6h9.8v6.6L7.6 10.4H0.6z" fill="none" stroke="#fff" stroke-width="0.9"/><circle cx="8.8" cy="8.6" r="1.3" fill="#152536" stroke="#fff" stroke-width="0.6"/></svg>
    <div class="abs" style="left:1009.5px;top:638.8px;width:0.7px;height:25.2px;background:#4a5566"></div>
  </div>
</div>


<!-- ===================== SHARED-SCREEN LABEL ===================== -->
<div class="abs" style="left:23.8px;top:652.7px;width:63px;height:8.6px;background:#000"></div>
<span class="t" style="left:25px;top:652.3px;font-size:7.6px;color:#fff;line-height:9.5px;font-weight:500">胡重立的共享屏幕</span>

<!-- ===================== RIGHT PANEL: THUMBNAIL ===================== -->
<div class="abs" id="thumb" style="left:1020px;top:52.5px;width:226.4px;height:127.4px;background:#f0f7fc;border:1.1px solid #5cc985;overflow:hidden">
  <div class="abs" style="left:0;top:0;width:224px;height:120.4px;background:#f0f7fc"></div>
  <div class="abs" style="left:1.8px;top:10.6px;width:220.6px;height:11px;background:#fff;border-radius:1px"></div>
  <div class="abs" style="left:37.2px;top:24.8px;width:139.2px;height:92px;background:#fff"></div>
  <div class="abs" style="left:0;top:116.3px;width:224px;height:4.1px;background:#f0f7fc"></div>
  <!-- tiny tabs / ribbon hints -->
  <div class="abs" style="left:2px;top:1.6px;width:2.6px;height:2px;background:#e8412f;opacity:0.6"></div>
  <div class="abs" style="left:9px;top:1.6px;width:2.6px;height:2.4px;background:#f0523a;opacity:0.48"></div>
  <div class="abs" style="left:15px;top:1.4px;width:2.6px;height:2.6px;background:#2f64e8"></div><div class="abs" style="left:18.5px;top:2.2px;width:18px;height:1.2px;background:#7a8089;opacity:0.42"></div>
  <div class="abs" style="left:41px;top:1.4px;width:2.6px;height:2.6px;background:#2f64e8"></div><div class="abs" style="left:44.5px;top:2.2px;width:18px;height:1.2px;background:#7a8089;opacity:0.42"></div>
  <div class="abs" style="left:67.5px;top:1.4px;width:2.6px;height:2.6px;background:#2f64e8"></div><div class="abs" style="left:71px;top:2.2px;width:18px;height:1.2px;background:#7a8089;opacity:0.42"></div>
  <div class="abs" style="left:93.5px;top:1.4px;width:2.6px;height:2.6px;background:#2f64e8"></div><div class="abs" style="left:97px;top:2.2px;width:18px;height:1.2px;background:#7a8089;opacity:0.42"></div>
  <div class="abs" style="left:119.5px;top:1.4px;width:2.6px;height:2.6px;background:#2f64e8"></div><div class="abs" style="left:123px;top:2.2px;width:12px;height:1.2px;background:#7a8089;opacity:0.42"></div>
  <div class="abs" style="left:144.5px;top:0.6px;width:26px;height:4.4px;background:#fff"></div>
  <div class="abs" style="left:145.8px;top:1.4px;width:2.6px;height:2.6px;background:#2f64e8"></div><div class="abs" style="left:149.5px;top:2.2px;width:14px;height:1.2px;background:#9aa0a8;opacity:0.42"></div>
  <div class="abs" style="left:194.5px;top:1.6px;width:2.4px;height:2.4px;border-radius:50%;background:#2f64e8"></div><div class="abs" style="left:197.5px;top:2.2px;width:7px;height:1.2px;background:#2f64e8;opacity:0.42"></div>
  <div class="abs" style="left:3px;top:7.2px;width:36px;height:1.2px;background:#8a9099;opacity:0.33"></div>
  <div class="abs" style="left:46px;top:6.6px;width:4.2px;height:2.4px;background:#2f64e8;opacity:0.54"></div>
  <div class="abs" style="left:54px;top:7.2px;width:88px;height:1.2px;background:#8a9099;opacity:0.30"></div>
  <div class="abs" style="left:147px;top:7.2px;width:10px;height:1.2px;background:#8a9099;opacity:0.36"></div>
  <div class="abs" style="left:214px;top:6.2px;width:8.2px;height:3.4px;background:#176af0"></div>
  <div class="abs" style="left:5px;top:13px;width:6px;height:2.4px;background:#8a9099;opacity:0.30"></div>
  <div class="abs" style="left:4px;top:17.6px;width:12px;height:1.2px;background:#8a9099;opacity:0.30"></div>
  <div class="abs" style="left:23px;top:13.6px;width:28px;height:1.2px;background:#aab0b9;opacity:0.36"></div>
  <div class="abs" style="left:23px;top:17.6px;width:46px;height:1.4px;background:#8a9099;opacity:0.27"></div>
  <div class="abs" style="left:58px;top:13.6px;width:12px;height:1.4px;background:#8a9099;opacity:0.27"></div>
  <div class="abs" style="left:73px;top:13.6px;width:40px;height:1.4px;background:#8a9099;opacity:0.24"></div>
  <div class="abs" style="left:73px;top:17.6px;width:38px;height:1.4px;background:#8a9099;opacity:0.24"></div>
  <div class="abs" style="left:114.5px;top:12.4px;width:13px;height:6.6px;border:0.5px solid #c8c8c8"></div>
  <span class="t doc" style="left:130.5px;top:13.2px;font-size:3.2px;font-weight:bold;line-height:5px;color:#111">标题 1</span>
  <span class="t" style="left:145px;top:13.4px;font-size:2.8px;font-weight:bold;line-height:5px;color:#111">标题 2</span>
  <div class="abs" style="left:161.5px;top:13px;width:3px;height:2.6px;background:#8a9099;opacity:0.30"></div><div class="abs" style="left:160px;top:17.6px;width:7px;height:1.2px;background:#8a9099;opacity:0.30"></div>
  <div class="abs" style="left:173px;top:13px;width:3px;height:2.6px;background:#8a9099;opacity:0.30"></div><div class="abs" style="left:170.5px;top:17.6px;width:8px;height:1.2px;background:#8a9099;opacity:0.30"></div>
  <div class="abs" style="left:182px;top:13px;width:3px;height:2.6px;background:#8a9099;opacity:0.30"></div><div class="abs" style="left:181px;top:17.6px;width:5px;height:1.2px;background:#8a9099;opacity:0.30"></div>
  <div class="abs" style="left:190.5px;top:13px;width:3px;height:2.6px;background:#8a9099;opacity:0.30"></div><div class="abs" style="left:189.5px;top:17.6px;width:5px;height:1.2px;background:#8a9099;opacity:0.30"></div>
  <div class="abs" style="left:197px;top:13px;width:3px;height:2.6px;background:#6a86d8;opacity:0.36"></div><div class="abs" style="left:196.5px;top:17.6px;width:5px;height:1.2px;background:#8a9099;opacity:0.30"></div>
  <!-- tiny document (real text, scaled) -->
  <div class="abs doc" style="left:0;top:0;width:991px;height:556px;transform:scale(0.226);transform-origin:0 0;color:#111">
    <div class="t" style="left:284px;top:205px;width:377px;font-size:26.9px;font-weight:900;line-height:32px;text-align:justify;text-align-last:justify">数字创意实验班微课程实施方案</div>
    <div class="t" style="left:258px;top:275px;font-size:14.5px;line-height:18px;font-weight:700">一、项目背景与目标</div>
    <div class="ln" style="left:258px;top:309px;padding-left:21.4px;font-weight:700">本方案提出基于 2023 级数字创意实验班人才培养方案，设立数字创意实验班微课程，</div>
    <div class="ln" style="left:258px;top:330px;font-weight:700">将人培中“基础课程、专业核心、专业拓展和实验实践”等课程模块进行有机整合，设立</div>
    <div class="ln" style="left:258px;top:351px;font-weight:700">“导学、入门、强化和拓展”共四类课程，以专业课程互通为根本，强调强化课程促赛、</div>
    <div class="ln" style="left:258px;top:372px;font-weight:700">拓展课程拔高，帮助学生构建专业知识体系、提高就业竞争力；采用学业导师和企业导师</div>
    <div class="ln" style="left:258px;top:393px;font-weight:700">联合授课的形式，推动校企深度融合，实现供需侧精准对接；以“线上、线下相结合”的</div>
    <div class="ln" style="left:258px;top:414px;width:395px;font-weight:700">教学模式，为学生提供个性化的教学服务，最终实现高素质应用型人才的培养目标。</div>
    <div class="t" style="left:258px;top:442px;font-size:14.5px;line-height:18px;font-weight:700">二、特色亮点</div>
    <div class="ln" style="left:258px;top:476px;font-weight:900">（1）推进学科交叉融合，培养复合型人才。导学课程和入门课程面向工学院所有实验班</div>
    <div class="ln" style="left:258px;top:497px;font-weight:700">学生开放，促进跨学科交流，比如软工学生可以通过微课程学习前端设计美化页面，数媒</div>
  </div>
  <!-- scrollbar / tools / ime hints -->
  <div class="abs" style="left:214.3px;top:27.4px;width:1px;height:9.2px;background:#c9cdd4"></div>
  <div class="abs" style="left:219.4px;top:24.6px;width:1.6px;height:52px;background:repeating-linear-gradient(180deg,#6a7079 0 2px,transparent 2px 5.7px);opacity:.45"></div>
  <div class="abs" style="left:189.6px;top:95.3px;width:3.8px;height:3.6px;background:#f26a25;border-radius:1px;opacity:.85"></div>
  <div class="abs" style="left:194.5px;top:96.2px;width:27px;height:2px;background:repeating-linear-gradient(90deg,#1a6fe0 0 1.8px,#fff 1.8px 3.5px);opacity:.7"></div>
  <div class="abs" style="left:2px;top:117.6px;width:92px;height:1.2px;background:#8a9099;opacity:.45"></div>
  <div class="abs" style="left:149px;top:117.6px;width:72px;height:1.2px;background:#8a9099;opacity:.4"></div>
  <!-- tiny taskbar -->
  <div class="abs" style="left:0;top:120.4px;width:224px;height:5.4px;background:#152536"></div>
  <div class="abs" style="left:6.9px;top:120.4px;width:42px;height:5.4px;background:#fff"></div>
  <div class="abs" style="left:57px;top:121.3px;width:102px;height:3.6px;background:repeating-linear-gradient(90deg,#2f8fe8 0 3.4px,transparent 3.4px 5.9px,#f5c542 5.9px 9.3px,transparent 9.3px 11.8px,#5fc43a 11.8px 15.2px,transparent 15.2px 17.7px,#e8412f 17.7px 21.1px,transparent 21.1px 23.6px)"></div>
  <div class="abs" style="left:168px;top:122px;width:50px;height:2px;background:repeating-linear-gradient(90deg,#e8eaee 0 2.4px,transparent 2.4px 5.6px);opacity:.8"></div>
</div>
<div class="abs" style="left:1022.8px;top:169.2px;width:64.6px;height:9.6px;background:#000"></div>
<span class="t" style="left:1024.4px;top:169.2px;font-size:7.7px;color:#fff;line-height:9.8px;font-weight:500">胡重立的共享屏幕</span>

<!-- ===================== RIGHT PANEL: PARTICIPANTS ===================== -->
<svg style="left:1109.5px;top:228.5px" width="45.5" height="45.5" viewBox="0 0 46 46">
  <defs><clipPath id="c1"><circle cx="23" cy="23" r="23"/></clipPath>
  <pattern id="p1" width="11" height="11.5" patternUnits="userSpaceOnUse" x="0.5" y="5"><rect width="11" height="11.5" fill="#c5526b"/><path d="M0 0h11M0 0v11.5" stroke="#a83a52" stroke-width="0.7"/><path d="M2.6 4.4c.8-1 1.800.8 2.6-.2M2.4 6.6c1 .6 1.6-.8 2.6 0M6.4 4.2c.8.8 1.4-.8 2.4 0M6.6 6.6c.6-.8 1.600.6 2.2-.2" stroke="#f5dfe2" stroke-width="0.8" fill="none"/></pattern></defs>
  <g clip-path="url(#c1)"><rect width="46" height="46" fill="url(#p1)"/><rect x="14.5" y="16.5" width="9" height="10.5" fill="#d8b888"/><path d="M17 25.5c0-3 1-6.5 2.4-6.5s2.2 1.4 1.4 2.8l.8 3.7z" fill="#141a1a"/></g>
</svg>
<span class="t" style="left:1024px;top:303.5px;font-size:7.7px;color:#fff;line-height:10px">范宝珠</span>

<svg style="left:1109.5px;top:363.5px" width="45.5" height="45.5" viewBox="0 0 46 46">
  <defs><clipPath id="c2"><circle cx="23" cy="23" r="23"/></clipPath>
  <radialGradient id="g2" cx="0.150" cy="0.450" r="0.8"><stop offset="0" stop-color="#2c4aa6"/><stop offset="0.5" stop-color="#182a6c"/><stop offset="1" stop-color="#0d1440"/></radialGradient></defs>
  <g clip-path="url(#c2)"><rect width="46" height="46" fill="url(#g2)"/>
  <path d="M12 4C17 0 27 -1 34 2c7 3 12 9 12 18 0 9-3 16-9 22l-5-6c1-4 0-8-2-10l-8 1c-2-3-4-6-4-10-2-4-4-9-6-13z" fill="#e4e7f7"/>
  <path d="M30 4c7 2 12 7 14 14-3-3-6-5-10-5 4 3 7 8 8 14-3-5-8-8-13-9zM36 26c3 2 5 5 6 9l-4 4c0-5-1-9-2-13z" fill="#f8f9ff"/>
  <path d="M34 14c3 1 6 4 8 8M33 20c3 2 5 5 6 9M38 8c3 2 5 5 6 8" stroke="#9aa2d0" stroke-width="0.9" fill="none"/>
  <path d="M15 11c3-2 8-2 11 1l-1 11c-3 3-7 3-9 0-1-4-2-8-1-12z" fill="#f6e9ee"/>
  <path d="M14 6c4-3 10-3 14 0-1 3-3 5-6 5-3 1-6 3-7 7-1-4-2-8-1-12z" fill="#eceefa"/>
  <ellipse cx="21" cy="15.6" rx="1.5" ry="1.3" fill="#3a8ee8"/><path d="M19 13.8c1.2-.8 2.8-.8 4 0" stroke="#5a6090" stroke-width="0.5" fill="none"/>
  <path d="M3 32c5-5 10-8 16-9l-2 4c-4 2-9 5-12 9zM6 38c4-4 8-7 13-9l-1 3c-4 2-7 5-9 8z" fill="#d4daf4"/>
  <path d="M19 31c3-2 8-2 12 0l4 15H13c1-6 3-11 6-15z" fill="#ecd9e0"/>
  <path d="M11 46c2-5 5-8 9-10l3 10zM27 40c4-1 8 1 10 5l-3 2-8-1z" fill="#141838"/><path d="M19 28c3 1 6 1 9 0" stroke="#1a1f4a" stroke-width="1.2" fill="none"/>
  </g>
</svg>
<span class="t" style="left:1024px;top:438px;font-size:7.7px;color:#fff;line-height:10px">工学院<span style="display:inline-block;transform:scaleX(1.7);margin:0 1.2px">-</span>邹鹏</span>

<svg style="left:1109.5px;top:497.5px" width="45.5" height="45.5" viewBox="0 0 46 46">
  <defs><clipPath id="c3"><circle cx="23" cy="23" r="23"/></clipPath>
  <linearGradient id="g3" x1="0" y1="0" x2="1" y2="0.3"><stop offset="0" stop-color="#5e50c2"/><stop offset="0.4" stop-color="#a996dc"/><stop offset="0.750" stop-color="#f3e4dc"/><stop offset="1" stop-color="#f6e8d8"/></linearGradient>
  <linearGradient id="g3b" x1="0" y1="0" x2="0" y2="1"><stop offset="0" stop-color="#e9d6dc" stop-opacity="0"/><stop offset="0.6" stop-color="#d8c4e0" stop-opacity="0.6"/><stop offset="1" stop-color="#6a5cc8"/></linearGradient></defs>
  <g clip-path="url(#c3)"><rect width="46" height="46" fill="url(#g3)"/><rect y="26" width="46" height="20" fill="url(#g3b)"/>
  <path d="M20 5c3 1.5 6 1.5 9 .5-2 2.5-6 3.5-9 2z" fill="#f09aa8" opacity=".9"/><circle cx="13" cy="4.5" r="1.1" fill="#fff"/>
  <path d="M3 14c2-1.5 4-1 4.5 1-.5 2-2.5 3-4.5 2.5z" fill="#f0523a"/>
  <path d="M7 15c5-3 11-1 14 7 5-3 12-5 19-3-1 5-7 9-15 9l-5 1c-5 1-10 0-13-3 1-4 1-8 0-11z" fill="#3d3a48"/>
  <path d="M22 22c2 1 3 3 3 6" stroke="#1f1d28" stroke-width="1" fill="none"/>
  <path d="M3 26c5-3 11-3 16 0 4 2 8 3 12 2-3 4-9 6-15 5-5 0-10-2-13-7z" fill="#1b86d2"/><path d="M7 28c4-2 8-1 11 1-4 2-8 1-11-1zM20 31c3 0 6-1 8-2-2 3-5 4-8 2z" fill="#63dff0"/>
  <path d="M9 35c5 3 12 3 18 0M12 41c6-2 14-2 22 0" stroke="#fff" stroke-width="0.9" fill="none" opacity=".7"/>
  </g>
</svg>
<span class="t" style="left:1024px;top:572.5px;font-size:7.7px;color:#fff;line-height:10px">刘怡伶</span>

</body>
</html>
